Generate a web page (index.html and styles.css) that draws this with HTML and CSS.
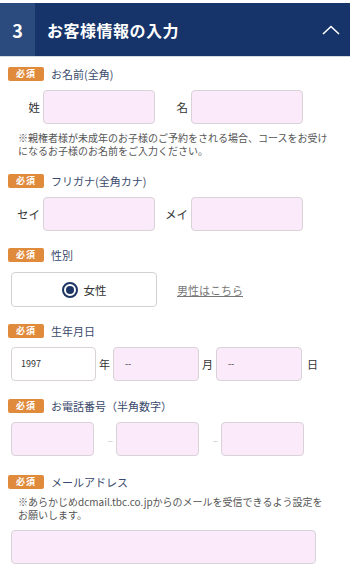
FILE: index.html
```html
<!DOCTYPE html>
<html lang="ja">
<head>
  <meta charset="UTF-8">
  <meta name="viewport" content="width=device-width, initial-scale=1.0">
  <title>お客様情報の入力</title>
  <link rel="stylesheet" href="styles.css">
</head>
<body>

  <!-- Step Header -->
  <div class="step-head">
    <div class="step-num">3</div>
    <div class="step-title">お客様情報の入力</div>
    <svg class="step-toggle" width="18" height="10" viewBox="0 0 18 10">
      <polyline points="1,9 9,1.5 17,9" fill="none" stroke="#fff" stroke-width="1.6"/>
    </svg>
  </div>

  <!-- Name -->
  <section class="field field-first">
    <div class="field-head">
      <span class="req">必須</span>
      <span class="field-name">お名前(全角)</span>
    </div>
    <div class="pair-row">
      <label class="pair-label">姓</label>
      <input class="text-input pair-input" type="text">
      <label class="pair-label">名</label>
      <input class="text-input pair-input" type="text">
    </div>
    <p class="note">※親権者様が未成年のお子様のご予約をされる場合、コースをお受けになるお子様のお名前をご入力ください。</p>
  </section>

  <!-- Kana -->
  <section class="field">
    <div class="field-head">
      <span class="req">必須</span>
      <span class="field-name">フリガナ(全角カナ)</span>
    </div>
    <div class="pair-row">
      <label class="pair-label">セイ</label>
      <input class="text-input pair-input" type="text">
      <label class="pair-label">メイ</label>
      <input class="text-input pair-input" type="text">
    </div>
  </section>

  <!-- Gender -->
  <section class="field">
    <div class="field-head">
      <span class="req">必須</span>
      <span class="field-name">性別</span>
    </div>
    <div class="gender-row">
      <div class="radio-box">
        <span class="radio"></span>
        <span>女性</span>
      </div>
      <a class="gender-link" href="#">男性はこちら</a>
    </div>
  </section>

  <!-- Birthday -->
  <section class="field">
    <div class="field-head">
      <span class="req">必須</span>
      <span class="field-name">生年月日</span>
    </div>
    <div class="date-row">
      <div class="text-input date-box date-year">1997</div>
      <span class="date-unit">年</span>
      <div class="text-input date-box">--</div>
      <span class="date-unit">月</span>
      <div class="text-input date-box">--</div>
      <span class="date-unit date-last">日</span>
    </div>
  </section>

  <!-- Phone -->
  <section class="field field-phone">
    <div class="field-head">
      <span class="req">必須</span>
      <span class="field-name">お電話番号（半角数字）</span>
    </div>
    <div class="phone-row">
      <input class="text-input phone-input" type="tel">
      <span class="phone-dash">–</span>
      <input class="text-input phone-input" type="tel">
      <span class="phone-dash">–</span>
      <input class="text-input phone-input" type="tel">
    </div>
  </section>

  <!-- Mail -->
  <section class="field field-mail">
    <div class="field-head">
      <span class="req">必須</span>
      <span class="field-name">メールアドレス</span>
    </div>
    <p class="note note-mail">※あらかじめdcmail.tbc.co.jpからのメールを受信できるよう設定をお願いします。</p>
    <input class="text-input mail-input" type="email">
  </section>

</body>
</html>
```

FILE: styles.css
```css
/* Basic Reset */
* {
  margin: 0;
  padding: 0;
  box-sizing: border-box;
}

body {
  background: #fff;
  font-family: "Noto Sans CJK JP", "Noto Sans", sans-serif;
  color: #333;
  width: 350px;
}

/* Step Header */
.step-head {
  margin-top: 3px;
  height: 54px;
  background: #163469;
  border-bottom: 1px solid #d3d9e3;
  display: flex;
  align-items: center;
  color: #fff;
}

.step-num {
  width: 35px;
  height: 100%;
  background: #2b4a7d;
  display: flex;
  justify-content: center;
  align-items: center;
  font-size: 18px;
  font-weight: 700;
}

.step-title {
  flex: 1;
  padding-left: 12px;
  font-size: 16px;
  font-weight: 700;
  letter-spacing: 0.5px;
}

.step-toggle {
  margin-right: 10px;
}

/* Fields */
.field {
  padding: 0 8px;
  margin-top: 17px;
}

.field-first {
  margin-top: 10px;
}

.field-phone {
  margin-top: 18px;
}

.field-mail {
  margin-top: 19px;
}

.field-head {
  display: flex;
  align-items: center;
  height: 14px;
}

.req {
  width: 36px;
  height: 14px;
  line-height: 14px;
  background: #e08a3b;
  color: #fff;
  border-radius: 2px;
  font-size: 9px;
  font-weight: 700;
  text-align: center;
  letter-spacing: 1px;
}

.field-name {
  margin-left: 7px;
  font-size: 11px;
  color: #3a4a6c;
}

/* Inputs */
.text-input {
  display: block;
  height: 34px;
  background: #fbeafa;
  border: 1px solid #d9d2d9;
  border-radius: 4px;
  font-family: inherit;
  outline: none;
}

.pair-row {
  display: flex;
  align-items: center;
  margin-top: 9px;
}

.pair-label {
  width: 32px;
  margin-right: 3px;
  text-align: right;
  font-size: 11.5px;
  color: #333;
}

.pair-label + .pair-input + .pair-label {
  width: 33px;
}

.pair-input {
  width: 112px;
}

.note {
  margin-top: 8px;
  padding: 0 13px 0 10px;
  font-size: 10px;
  line-height: 12.5px;
  color: #555;
}

/* Gender */
.gender-row {
  display: flex;
  align-items: center;
  margin-top: 10px;
  padding-left: 3px;
}

.radio-box {
  width: 146px;
  height: 35px;
  border: 1px solid #d2d2d2;
  border-radius: 4px;
  display: flex;
  justify-content: center;
  align-items: center;
  gap: 6px;
  font-size: 11.5px;
  color: #333;
}

.radio {
  width: 16px;
  height: 16px;
  border: 2px solid #1c3565;
  border-radius: 50%;
  display: flex;
  justify-content: center;
  align-items: center;
}

.radio::after {
  content: '';
  width: 8px;
  height: 8px;
  border-radius: 50%;
  background: #1c3565;
}

.gender-link {
  margin-left: 20px;
  font-size: 11px;
  color: #777;
  text-decoration: underline;
}

/* Birthday */
.date-row {
  display: flex;
  align-items: center;
  margin-top: 9px;
  padding-left: 3px;
}

.date-box {
  width: 86px;
  padding-left: 11px;
  line-height: 32px;
  font-size: 9px;
  color: #333;
}

.date-year {
  width: 85px;
  background: #fff;
  padding-left: 9px;
}

.date-unit {
  width: 17px;
  text-align: center;
  font-size: 11px;
  color: #333;
}

.date-last {
  width: auto;
  margin-left: 5px;
}

/* Phone */
.phone-row {
  display: flex;
  align-items: center;
  margin-top: 9px;
  padding-left: 3px;
}

.phone-input {
  width: 83px;
}

.phone-dash {
  width: 22px;
  text-align: right;
  padding-right: 3px;
  font-size: 10px;
  color: #c8c8c8;
}

/* Mail */
.note-mail {
  margin-top: 7px;
}

.mail-input {
  width: 305px;
  margin-top: 9px;
  margin-left: 3px;
}
```
